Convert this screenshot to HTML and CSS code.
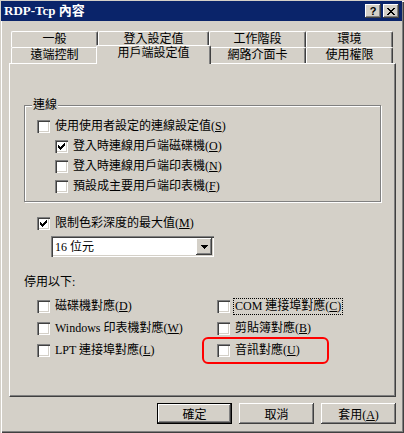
FILE: index.html
```html
<!DOCTYPE html>
<html lang="zh-Hant">
<head>
    <meta charset="UTF-8">
    <meta name="viewport" content="width=device-width, initial-scale=1.0">
    <title>RDP-Tcp 內容</title>
    <link rel="stylesheet" href="styles.css">
</head>
<body>
<div class="window">
    <div class="titlebar">
        <span class="title">RDP-Tcp 內容</span>
        <div class="title-buttons">
            <button class="title-btn help-btn">?</button>
            <button class="title-btn">
                <svg width="8" height="7" viewBox="0 0 8 7" shape-rendering="crispEdges"><path d="M0 0h2v1H0z M6 0h2v1H6z M1 1h2v1H1z M5 1h2v1H5z M2 2h4v1H2z M3 3h2v1H3z M2 4h4v1H2z M1 5h2v1H1z M5 5h2v1H5z M0 6h2v1H0z M6 6h2v1H6z" fill="#000"/></svg>
            </button>
        </div>
    </div>

    <div class="content">
        <div class="tabs">
            <div class="tab-row">
                <div class="tab w1">一般</div>
                <div class="tab w2">登入設定值</div>
                <div class="tab w3">工作階段</div>
                <div class="tab w4">環境</div>
            </div>
            <div class="tab-row">
                <div class="tab w1">遠端控制</div>
                <div class="tab w2 selected">用戶端設定值</div>
                <div class="tab w3">網路介面卡</div>
                <div class="tab w4">使用權限</div>
            </div>
        </div>

        <div class="panel">
            <div class="group">
                <span class="group-label">連線</span>
                <div class="check">
                    <span class="box"></span>
                    <span class="label">使用使用者設定的連線設定值(<u>S</u>)</span>
                </div>
                <div class="check sub">
                    <span class="box"><svg width="7" height="7" viewBox="0 0 7 7" shape-rendering="crispEdges"><path d="M6 0h1v1H6z M5 1h2v1H5z M0 2h1v1H0z M4 2h3v1H4z M0 3h2v1H0z M3 3h3v1H3z M0 4h5v1H0z M1 5h3v1H1z M2 6h1v1H2z" fill="#000"/></svg></span>
                    <span class="label">登入時連線用戶端磁碟機(<u>O</u>)</span>
                </div>
                <div class="check sub">
                    <span class="box"></span>
                    <span class="label">登入時連線用戶端印表機(<u>N</u>)</span>
                </div>
                <div class="check sub">
                    <span class="box"></span>
                    <span class="label">預設成主要用戶端印表機(<u>F</u>)</span>
                </div>
            </div>

            <div class="check limit">
                <span class="box"><svg width="7" height="7" viewBox="0 0 7 7" shape-rendering="crispEdges"><path d="M6 0h1v1H6z M5 1h2v1H5z M0 2h1v1H0z M4 2h3v1H4z M0 3h2v1H0z M3 3h3v1H3z M0 4h5v1H0z M1 5h3v1H1z M2 6h1v1H2z" fill="#000"/></svg></span>
                <span class="label">限制色彩深度的最大值(<u>M</u>)</span>
            </div>

            <div class="combo">
                <span class="combo-text">16 位元</span>
                <span class="combo-btn">
                    <svg width="7" height="4" viewBox="0 0 7 4" shape-rendering="crispEdges"><path d="M0 0h7v1H0z M1 1h5v1H1z M2 2h3v1H2z M3 3h1v1H3z" fill="#000"/></svg>
                </span>
            </div>

            <p class="disable-title">停用以下:</p>

            <div class="disable-grid">
                <div class="check">
                    <span class="box"></span>
                    <span class="label">磁碟機對應(<u>D</u>)</span>
                </div>
                <div class="check">
                    <span class="box"></span>
                    <span class="label focused">COM 連接埠對應(<u>C</u>)</span>
                </div>
                <div class="check">
                    <span class="box"></span>
                    <span class="label">Windows 印表機對應(<u>W</u>)</span>
                </div>
                <div class="check">
                    <span class="box"></span>
                    <span class="label">剪貼簿對應(<u>B</u>)</span>
                </div>
                <div class="check">
                    <span class="box"></span>
                    <span class="label">LPT 連接埠對應(<u>L</u>)</span>
                </div>
                <div class="check">
                    <span class="box"></span>
                    <span class="label">音訊對應(<u>U</u>)</span>
                    <span class="highlight"></span>
                </div>
            </div>
        </div>

        <div class="buttons">
            <button class="btn default">確定</button>
            <button class="btn">取消</button>
            <button class="btn">套用(<u>A</u>)</button>
        </div>
    </div>
</div>
</body>
</html>
```

FILE: styles.css
```css
body {
    margin: 0;
    font-family: "Liberation Serif", "Noto Sans CJK TC", serif;
    font-size: 12px;
    color: #000;
}

.window {
    width: 404px;
    height: 433px;
    box-sizing: border-box;
    background-color: #d4d0c8;
    padding: 1px 2px 2px 1px;
    box-shadow: inset 1px 1px #d4d0c8, inset 2px 2px #fff, inset -1px -1px #404040, inset -2px -2px #808080;
    display: flex;
    flex-direction: column;
}

/* title bar */
.titlebar {
    height: 20px;
    background-color: #0a246a;
    display: flex;
    align-items: center;
    justify-content: space-between;
    padding: 0 3px 0 3px;
}

.title {
    color: #fff;
    font-weight: bold;
    font-size: 13px;
    line-height: 14px;
}

.title-buttons {
    display: flex;
    gap: 2px;
}

.title-btn {
    width: 16px;
    height: 14px;
    padding: 0;
    border: none;
    background-color: #d4d0c8;
    box-shadow: inset -1px -1px #404040, inset 1px 1px #fff, inset -2px -2px #808080;
    display: flex;
    align-items: center;
    justify-content: center;
    font-family: "Liberation Sans", sans-serif;
    font-weight: bold;
    font-size: 11px;
    line-height: 12px;
    color: #000;
}

.help-btn {
    padding-bottom: 1px;
}

.content {
    flex: 1;
    display: flex;
    flex-direction: column;
    padding: 10px 6px 7px 8px;
}

/* tabs */
.tabs {
    margin-left: 2px;
}

.tab-row {
    display: flex;
    height: 16px;
}

.tab {
    box-sizing: border-box;
    height: 16px;
    border-top: 1px solid #fff;
    border-left: 1px solid #fff;
    border-right: 1px solid #404040;
    box-shadow: inset -1px 0 #808080;
    border-top-left-radius: 2px;
    border-top-right-radius: 2px;
    text-align: center;
    line-height: 15px;
    background-color: #d4d0c8;
}

.w1 { width: 87px; }
.w2 { width: 111px; }
.w3 { width: 97px; }
.w4 { width: 87px; }

.tab.selected {
    position: relative;
    z-index: 1;
    width: 115px;
    height: 19px;
    margin: -2px -2px 0 -2px;
}

/* main panel */
.panel {
    flex: 1;
    box-sizing: border-box;
    border-top: 1px solid #fff;
    border-left: 1px solid #fff;
    border-right: 1px solid #404040;
    border-bottom: 1px solid #404040;
    box-shadow: inset -1px -1px #808080;
    padding: 41px 14px 0 14px;
    display: flex;
    flex-direction: column;
}

.group {
    position: relative;
    border: 1px solid #808080;
    box-shadow: inset 1px 1px #fff, 1px 1px #fff;
    padding: 10px 0 5px 12px;
}

.group-label {
    position: absolute;
    top: -8px;
    left: 7px;
    padding: 0 1px;
    line-height: 14px;
    background-color: #d4d0c8;
}

.check {
    position: relative;
    display: flex;
    align-items: center;
    gap: 4px;
    height: 20px;
}

.check.sub {
    margin-left: 18px;
}

.check.limit {
    margin: 11px 0 0 13px;
}

.box {
    width: 13px;
    height: 13px;
    flex-shrink: 0;
    background-color: #fff;
    box-shadow: inset 1px 1px #808080, inset 2px 2px #404040, inset -1px -1px #fff, inset -2px -2px #d4d0c8;
    display: flex;
    align-items: center;
    justify-content: center;
}

.label {
    line-height: 13px;
    padding: 1px 1px;
    white-space: nowrap;
}

.label.focused {
    outline: 1px dotted #000;
}

/* combo box */
.combo {
    width: 163px;
    height: 21px;
    box-sizing: border-box;
    margin: 3px 0 0 27px;
    padding: 2px;
    background-color: #fff;
    box-shadow: inset 1px 1px #808080, inset 2px 2px #404040, inset -1px -1px #fff, inset -2px -2px #d4d0c8;
    display: flex;
    align-items: center;
}

.combo-text {
    flex: 1;
    padding-left: 2px;
    line-height: 14px;
}

.combo-btn {
    width: 16px;
    height: 17px;
    background-color: #d4d0c8;
    box-shadow: inset -1px -1px #404040, inset 1px 1px #fff, inset -2px -2px #808080;
    display: flex;
    align-items: center;
    justify-content: center;
}

.disable-title {
    margin: 18px 0 0 0;
    line-height: 14px;
}

.disable-grid {
    display: grid;
    grid-template-columns: 180px auto;
    grid-auto-rows: 22px;
    margin: 6px 0 0 13px;
}

.disable-grid .check {
    height: 22px;
}

/* red marker round the audio option */
.highlight {
    position: absolute;
    left: -15px;
    top: -2px;
    width: 127px;
    height: 27px;
    box-sizing: border-box;
    border: 2px solid #f00;
    border-radius: 6px;
}

/* bottom buttons */
.buttons {
    display: flex;
    justify-content: flex-end;
    gap: 7px;
    margin-top: 6px;
}

.btn {
    width: 75px;
    height: 21px;
    padding: 0;
    border: none;
    background-color: #d4d0c8;
    box-shadow: inset -1px -1px #404040, inset 1px 1px #fff, inset -2px -2px #808080;
    font-family: "Liberation Serif", "Noto Sans CJK TC", serif;
    font-size: 12px;
    color: #000;
}

.btn.default {
    box-shadow: inset 0 0 0 1px #000, inset -2px -2px #404040, inset 2px 2px #fff, inset -3px -3px #808080;
}
```
